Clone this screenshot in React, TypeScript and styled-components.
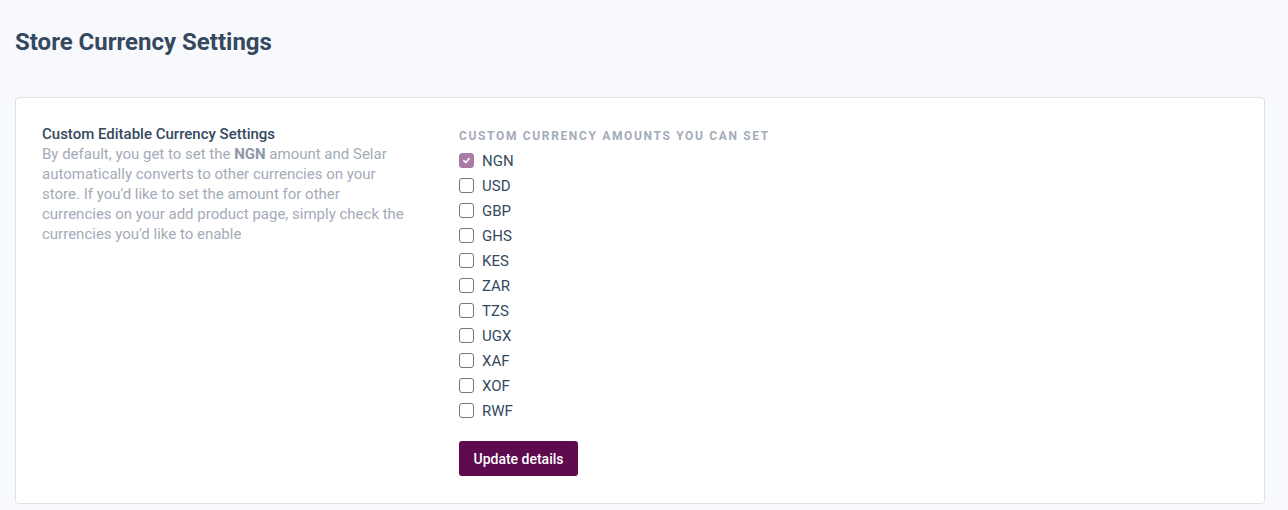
import React from "react";
import styled, { createGlobalStyle } from "styled-components";

const Global = createGlobalStyle`
  html, body { margin: 0; padding: 0; background: #f8f9fd; }
  body { font-family: Roboto, "Noto Sans", sans-serif; color: #35495e; }
  * { box-sizing: border-box; }
`;

const Page = styled.div`
  padding: 26px 23px 7px 15px;
  min-height: 510px;
`;

const Title = styled.h1`
  margin: 0 0 39px 0;
  font-size: 24px;
  line-height: 32px;
  font-weight: 700;
  color: #35495e;
`;

const Card = styled.section`
  background: #fff;
  border: 1px solid #dde2e8;
  border-radius: 4px;
  padding: 26px 26px 27px 26px;
  display: flex;
  gap: 52px;
`;

const Info = styled.div`
  width: 365px;
  flex-shrink: 0;
`;

const InfoTitle = styled.div`
  font-size: 15px;
  line-height: 20px;
  font-weight: 500;
  color: #35495e;
`;

const InfoText = styled.p`
  margin: 0;
  font-size: 15px;
  line-height: 20px;
  color: #a3abb8;
  b { font-weight: 700; color: #8e97a5; }
`;

const Options = styled.div`
  display: flex;
  flex-direction: column;
`;

const Label = styled.div`
  font-size: 12px;
  line-height: 20px;
  font-weight: 700;
  letter-spacing: 1.65px;
  text-transform: uppercase;
  color: #a3acb9;
  margin-top: 2px;
  margin-bottom: 2px;
`;

const Row = styled.label`
  display: flex;
  align-items: center;
  gap: 8px;
  height: 25px;
  font-size: 15px;
  color: #35495e;
`;

const Box = styled.span<{ $checked?: boolean }>`
  width: 15px;
  height: 15px;
  border-radius: 3px;
  display: inline-flex;
  align-items: center;
  justify-content: center;
  border: 1px solid ${(p) => (p.$checked ? "#a97ca6" : "#767676")};
  background: ${(p) => (p.$checked ? "#a97ca6" : "#fff")};
`;

const Button = styled.button`
  margin-top: 18px;
  align-self: flex-start;
  width: 119px;
  height: 35px;
  border: none;
  border-radius: 3px;
  background: #5e0a4e;
  color: #fff;
  font-family: Roboto, sans-serif;
  font-size: 14px;
  font-weight: 500;
`;

const currencies = ["NGN", "USD", "GBP", "GHS", "KES", "ZAR", "TZS", "UGX", "XAF", "XOF", "RWF"];

export default function App() {
  return (
    <Page>
      <Global />
      <Title>Store Currency Settings</Title>
      <Card>
        <Info>
          <InfoTitle>Custom Editable Currency Settings</InfoTitle>
          <InfoText>
            By default, you get to set the <b>NGN</b> amount and Selar automatically converts to other
            currencies on your store. If you'd like to set the amount for other currencies on your add
            product page, simply check the currencies you'd like to enable
          </InfoText>
        </Info>
        <Options>
          <Label>Custom currency amounts you can set</Label>
          {currencies.map((c, i) => (
            <Row key={c}>
              <Box $checked={i === 0}>
                {i === 0 && (
                  <svg width="9" height="9" viewBox="0 0 10 10">
                    <path d="M2 5.2 L4.2 7.2 L8 2.8" stroke="#fff" strokeWidth="1.8" fill="none" strokeLinecap="round" strokeLinejoin="round" />
                  </svg>
                )}
              </Box>
              {c}
            </Row>
          ))}
          <Button>Update details</Button>
        </Options>
      </Card>
    </Page>
  );
}
